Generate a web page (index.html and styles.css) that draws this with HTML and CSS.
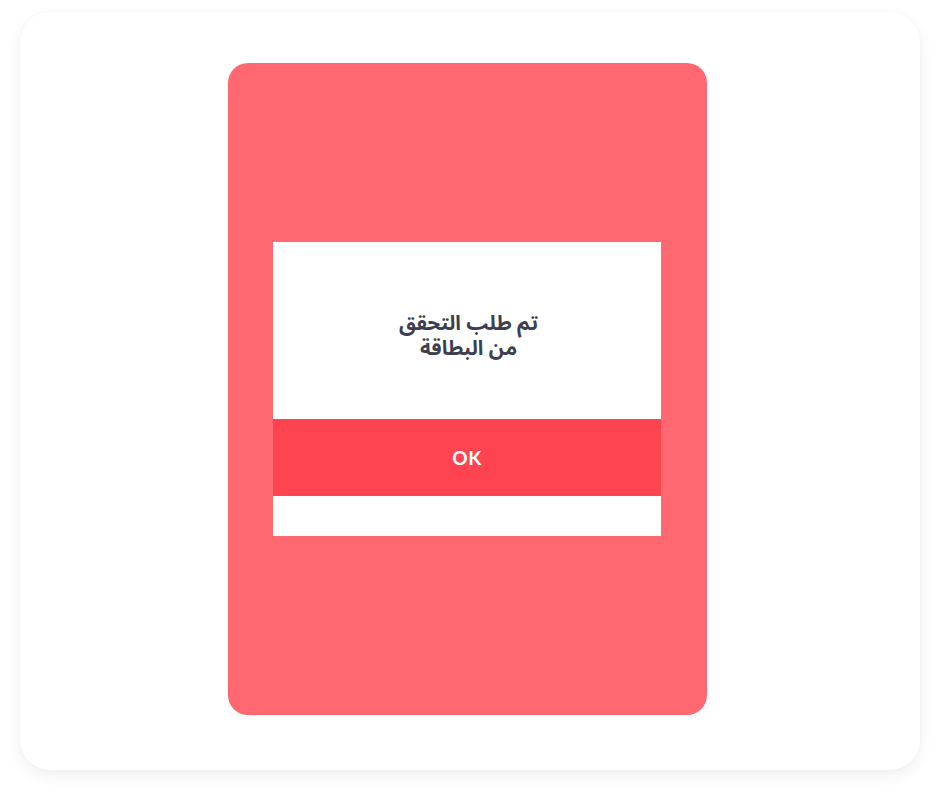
FILE: index.html
```html
<!DOCTYPE html>
<html lang="ar">
<head>
  <meta charset="UTF-8" />
  <title>تم طلب التحقق</title>
  <link rel="stylesheet" href="styles.css">
</head>
<body>
  <div class="frame">
    <div class="panel">
      <div class="dialog">
        <div class="message" dir="rtl">
          <p>تم طلب التحقق<br>من البطاقة</p>
        </div>
        <button class="ok-btn" type="button">OK</button>
        <div class="dialog-foot"></div>
      </div>
    </div>
  </div>
</body>
</html>
```

FILE: styles.css
```css
html, body {
  margin: 0;
  height: 100%;
}

body {
  background: #ffffff;
  padding: 12px 20px 28px;
  box-sizing: border-box;
  font-family: 'Noto Sans Arabic', 'Noto Naskh Arabic', 'DejaVu Sans', sans-serif;
}

.frame {
  height: 100%;
  background: #fff;
  border-radius: 30px;
  box-shadow: 0 6px 16px rgba(0, 0, 0, 0.06), 0 0 4px rgba(0, 0, 0, 0.03);
  display: flex;
  justify-content: center;
  align-items: center;
}

.panel {
  width: 479px;
  height: 652px;
  margin: -4px 5px 0 0;
  background: #ff6870;
  border-radius: 20px;
  display: flex;
  justify-content: center;
  align-items: center;
}

.dialog {
  width: 388px;
  margin-right: 1px;
  background: #fff;
  display: flex;
  flex-direction: column;
}

.message {
  height: 177px;
  display: flex;
  align-items: center;
  justify-content: center;
}

.message p {
  margin: 0;
  padding: 11px 0 0 3px;
  text-align: center;
  font-size: 20.5px;
  font-weight: bold;
  line-height: 25px;
  color: #3e3f4e;
}

.ok-btn {
  height: 77px;
  border: none;
  background: #ff4451;
  color: #fff;
  font-family: 'Lato', 'Open Sans', sans-serif;
  font-weight: bold;
  font-size: 19px;
  letter-spacing: 0.5px;
  cursor: pointer;
}

.dialog-foot {
  height: 40px;
}
```
